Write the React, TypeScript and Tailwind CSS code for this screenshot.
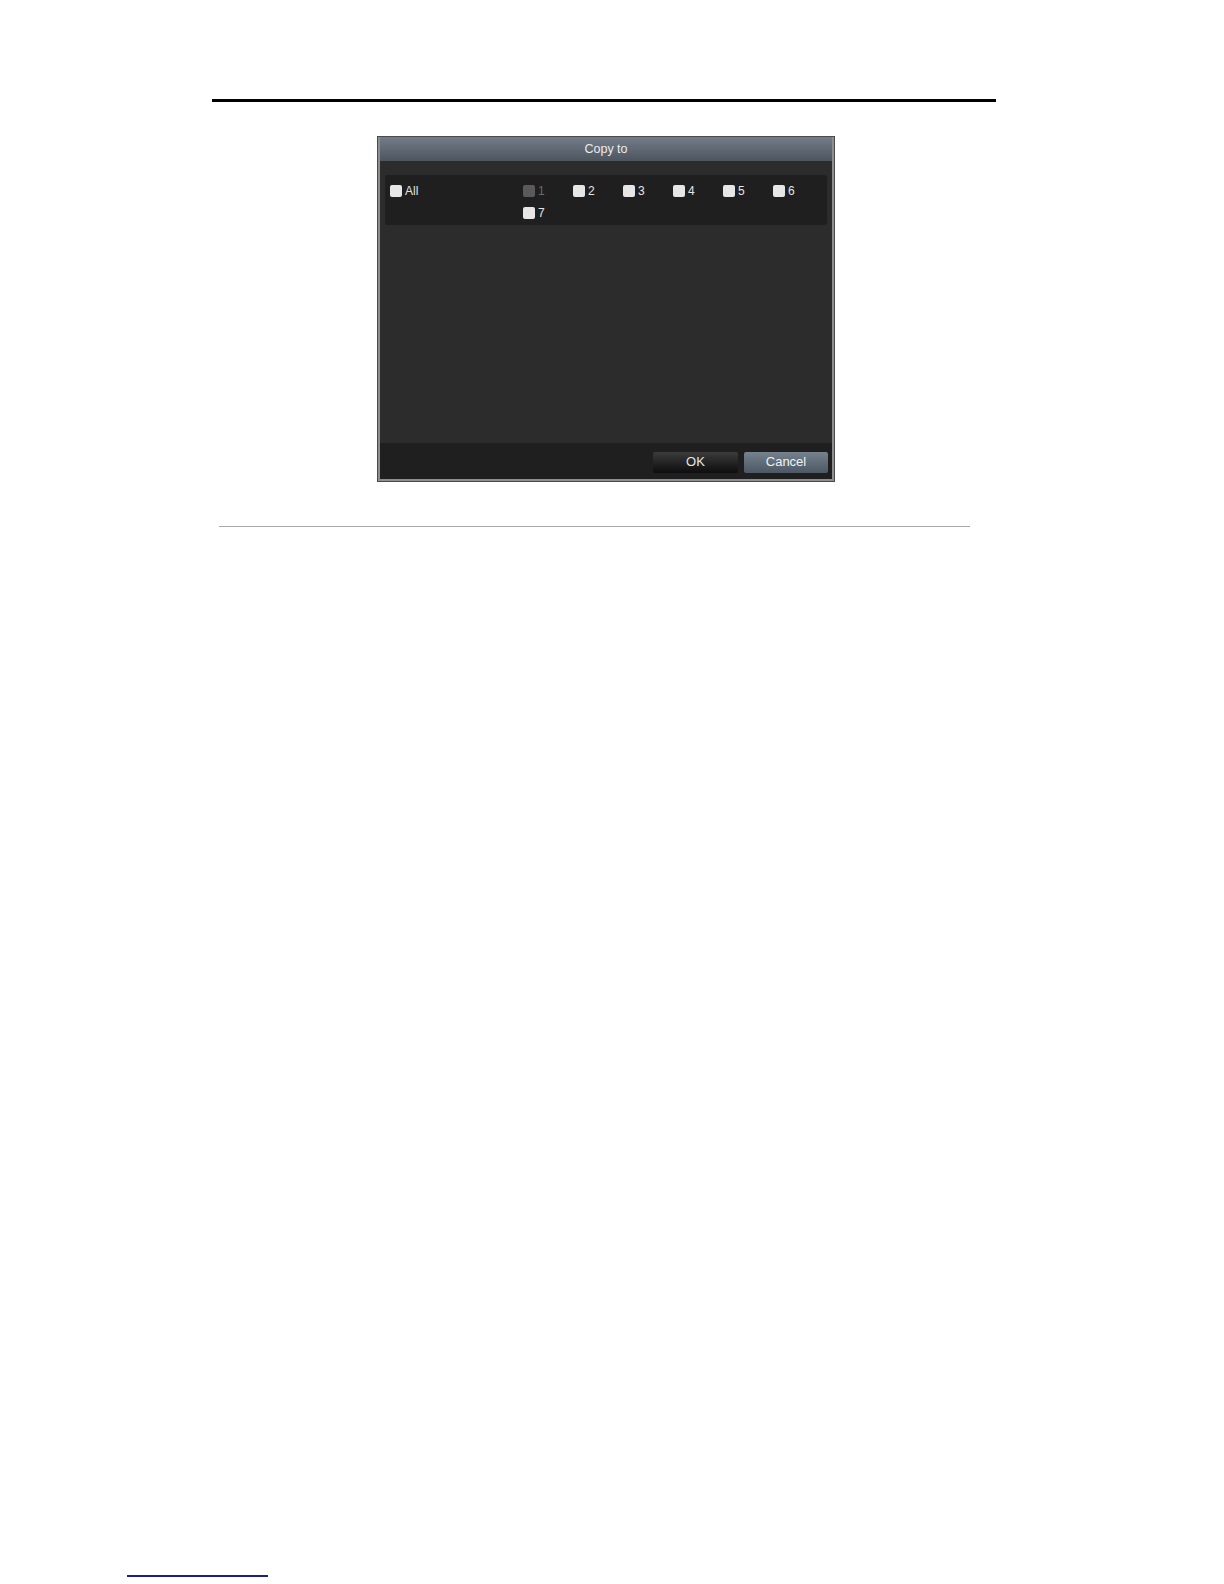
import React from 'react';

const channels = [1, 2, 3, 4, 5, 6, 7];

function Box({ disabled, label }: { disabled?: boolean; label: string }) {
  return (
    <div className="flex items-center gap-[3px] h-[19px]">
      <span
        className={
          'block w-[12px] h-[12px] rounded-[2px] ' +
          (disabled ? 'bg-[#5a5a5a]' : 'bg-[#e6e6e6]')
        }
      />
      <span className={'text-[12px] leading-none ' + (disabled ? 'text-[#6a6a6a]' : 'text-[#e4e4e4]')}>
        {label}
      </span>
    </div>
  );
}

export default function App() {
  return (
    <div className="w-[1224px] h-[1584px] bg-white relative" style={{ fontFamily: '"Liberation Sans", Arial, sans-serif' }}>
      <div className="pt-[99px]">
        <div className="ml-[212px] w-[784px] h-[3px] bg-black" />

        <div className="ml-[377px] mt-[34px] w-[458px] border border-[#4a4a4a]">
          <div className="border-2 border-[#8e8e8e] border-t-0">
            <div className="h-[24px] bg-gradient-to-b from-[#737d89] to-[#4d555f] flex items-center justify-center text-[12.5px] text-[#ececec]">
              Copy to
            </div>
            <div className="h-[282px] bg-[#2c2c2c] pt-[14px] px-[5px]">
              <div className="bg-[#1f1f1f] rounded-[3px] h-[50px] flex pt-[6px] pl-[5px]">
                <div className="w-[133px]">
                  <Box label="All" />
                </div>
                <div className="grid grid-cols-6 w-[300px]">
                  {channels.map((c) => (
                    <Box key={c} label={String(c)} disabled={c === 1} />
                  ))}
                </div>
              </div>
            </div>
            <div className="h-[36px] bg-[#1f1f1f] flex items-center justify-end gap-[6px] pr-[4px] pt-[2px]">
              <button className="w-[85px] h-[21px] bg-gradient-to-b from-[#3c3c3c] to-[#0e0e0e] text-[13px] text-[#e6e6e6] rounded-[2px]">
                OK
              </button>
              <button className="w-[84px] h-[21px] bg-gradient-to-b from-[#75838f] to-[#4c5864] text-[13px] text-[#eef2f5] rounded-[2px]">
                Cancel
              </button>
            </div>
          </div>
        </div>

        <div className="ml-[219px] mt-[44px] w-[751px] h-px bg-[#a8a8a8]" />
      </div>
      <div className="absolute left-[127px] top-[1575px] w-[141px] h-[2px] bg-[#1f1f8c]" />
    </div>
  );
}
